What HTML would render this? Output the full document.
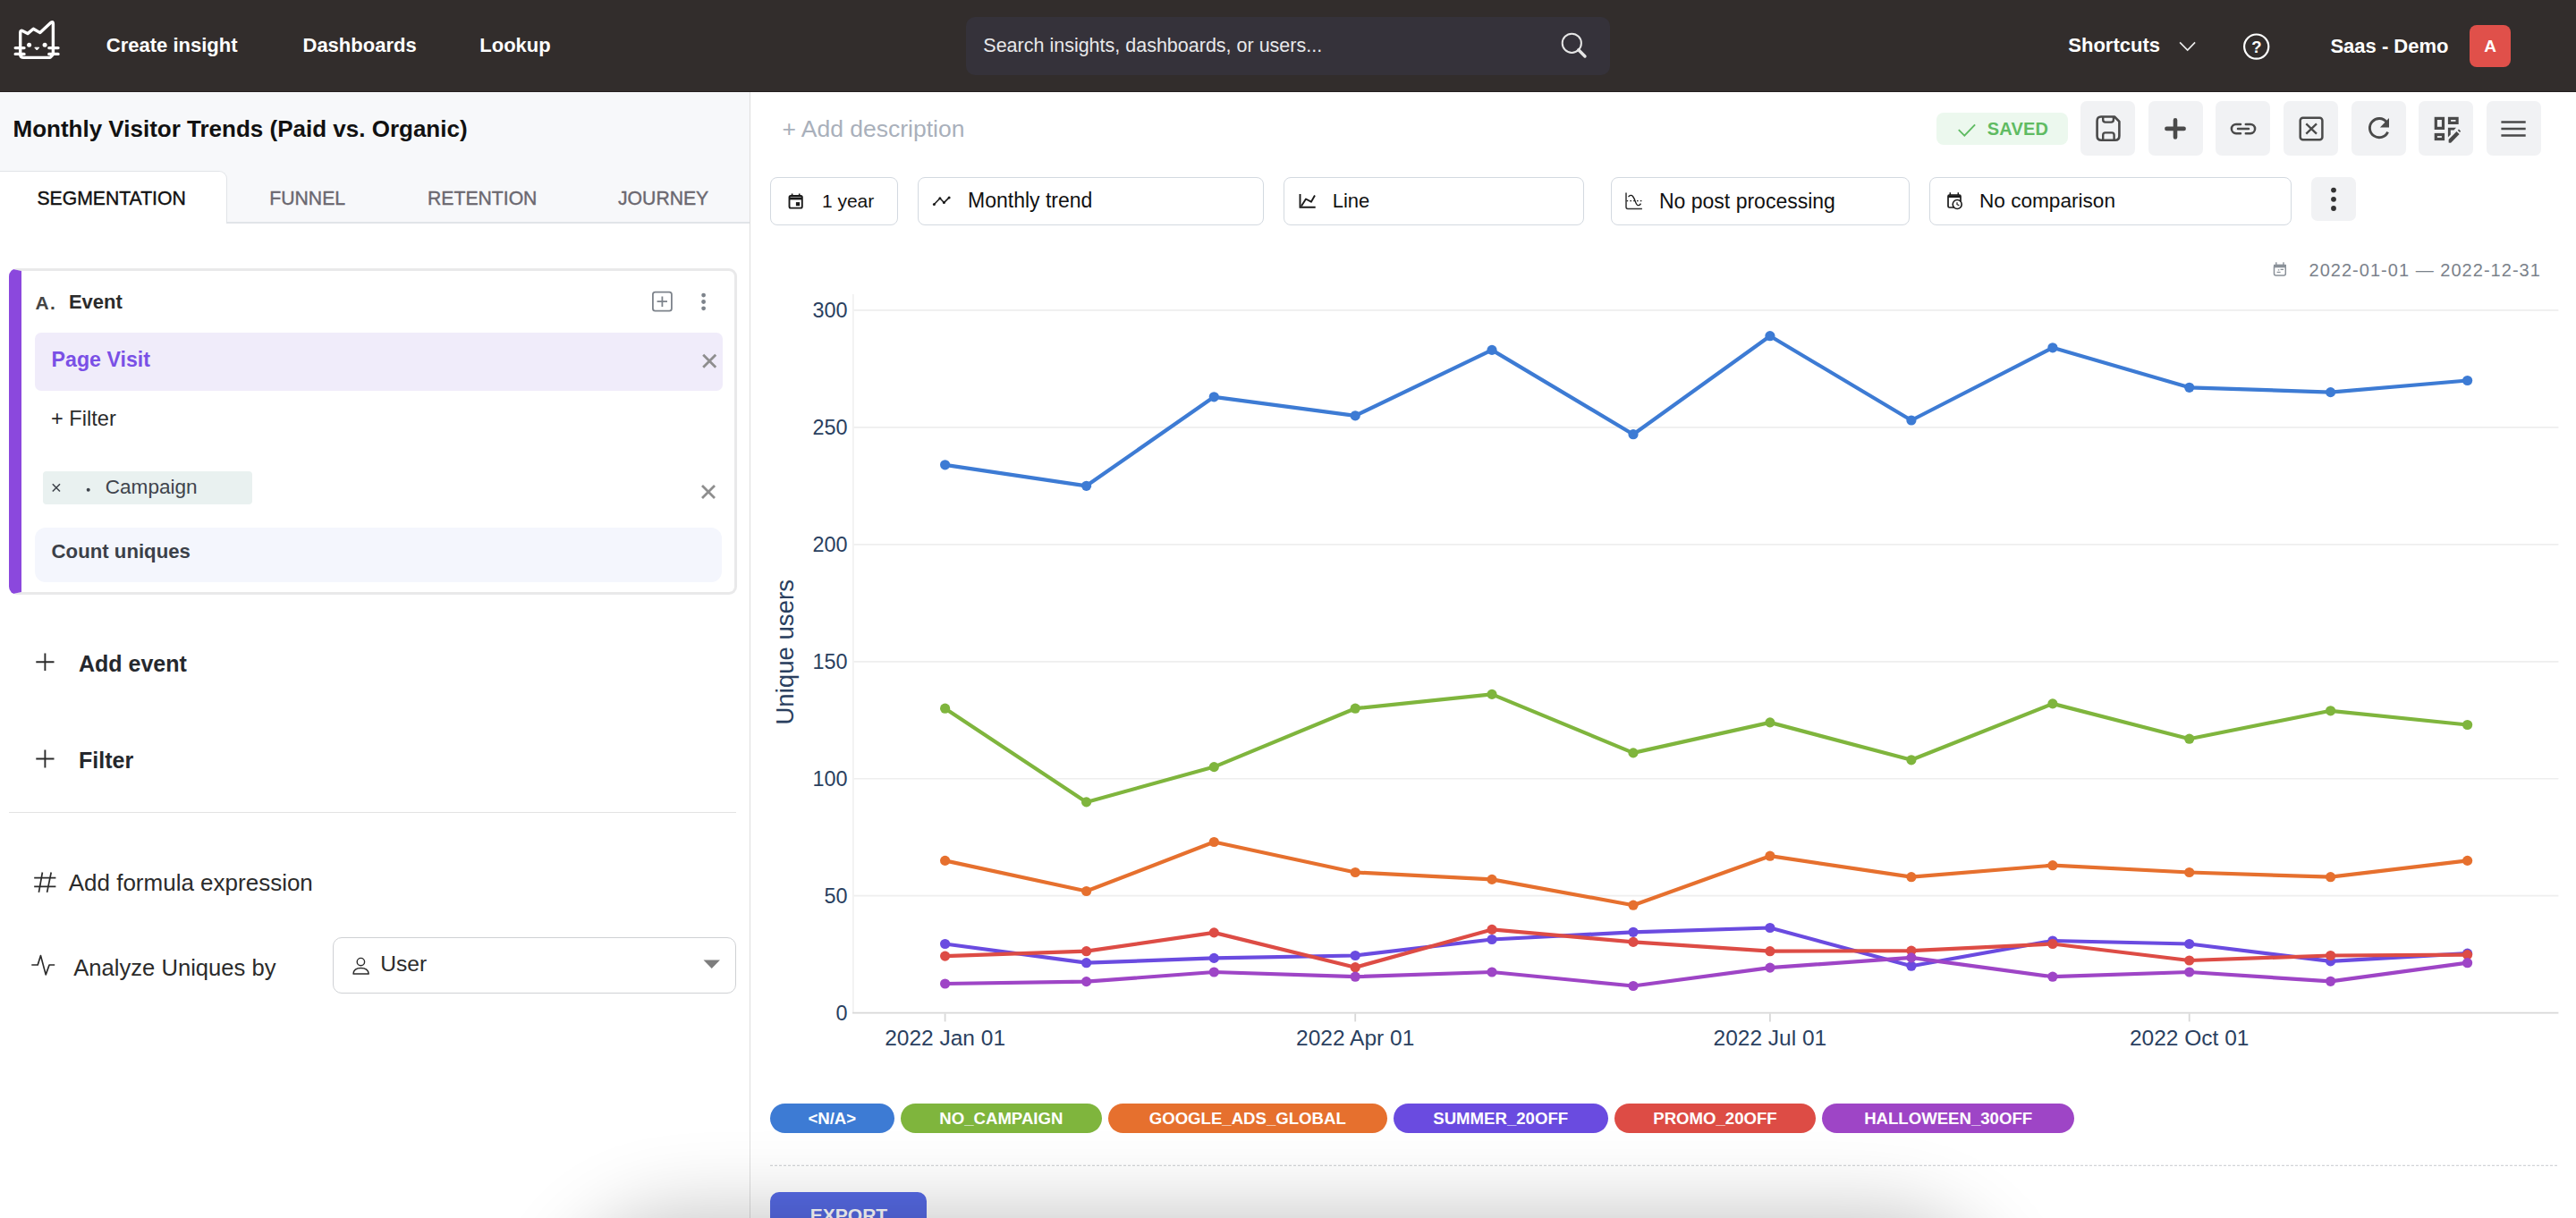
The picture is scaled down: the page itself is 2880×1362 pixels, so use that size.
<!DOCTYPE html>
<html><head><meta charset="utf-8"><style>
html,body{margin:0;padding:0;}
body{width:2880px;height:1362px;overflow:hidden;position:relative;background:#fff;font-family:"Liberation Sans", sans-serif;}
.t{position:absolute;line-height:1;white-space:nowrap;}
.r{position:absolute;}
svg.r{overflow:visible;}
</style></head><body>
<div class="r" style="left:0.0px;top:0.0px;width:2880.0px;height:103.0px;background:#322d2c;"></div>
<div class="r" style="left:0.0px;top:102.0px;width:2880.0px;height:1.0px;background:#241f1f;"></div>
<div class="t" style="left:118.8px;top:40.2px;font-size:22px;font-weight:700;color:#fff;">Create insight</div>
<div class="t" style="left:338.5px;top:40.4px;font-size:22px;font-weight:700;color:#fff;">Dashboards</div>
<div class="t" style="left:536.3px;top:40.4px;font-size:22px;font-weight:700;color:#fff;">Lookup</div>
<div class="r" style="left:1079.8px;top:19.0px;width:719.9px;height:65.0px;background:#35323a;border-radius:10px;"></div>
<div class="t" style="left:1099.3px;top:40.7px;font-size:21.5px;font-weight:400;color:#e8e8ea;">Search insights, dashboards, or users...</div>
<div class="t" style="left:2312.3px;top:40.1px;font-size:22px;font-weight:700;color:#fff;">Shortcuts</div>
<div class="t" style="left:2605.4px;top:40.5px;font-size:22px;font-weight:700;color:#fff;">Saas - Demo</div>
<div class="r" style="left:2761.0px;top:28.0px;width:46.0px;height:47.0px;background:#e0504a;border-radius:8px;"></div>
<div class="t" style="left:2777.3px;top:41.8px;font-size:19px;font-weight:700;color:#fff;">A</div>
<div class="r" style="left:0.0px;top:103.0px;width:838.0px;height:146.0px;background:#f7f8fa;"></div>
<div class="r" style="left:0.0px;top:248.0px;width:838.0px;height:1.5px;background:#e1e4e8;"></div>
<div class="r" style="left:838.0px;top:103.0px;width:1.3px;height:1259.0px;background:#dedede;"></div>
<div class="r" style="left:0.0px;top:191.0px;width:254.3px;height:59.0px;background:#fff;border:1.5px solid #e1e4e8;border-left:none;border-bottom:none;border-top-right-radius:9px;box-sizing:border-box;"></div>
<div class="t" style="left:14.5px;top:131.2px;font-size:26px;font-weight:700;color:#111;">Monthly Visitor Trends (Paid vs. Organic)</div>
<div class="t" style="left:41.4px;top:210.7px;font-size:21.2px;font-weight:400;color:#111;-webkit-text-stroke:0.4px currentColor;">SEGMENTATION</div>
<div class="t" style="left:301.3px;top:210.7px;font-size:21.2px;font-weight:400;color:#6b6870;-webkit-text-stroke:0.4px currentColor;">FUNNEL</div>
<div class="t" style="left:478.0px;top:210.7px;font-size:21.2px;font-weight:400;color:#6b6870;-webkit-text-stroke:0.4px currentColor;">RETENTION</div>
<div class="t" style="left:691.0px;top:210.7px;font-size:21.2px;font-weight:400;color:#6b6870;-webkit-text-stroke:0.4px currentColor;">JOURNEY</div>
<div class="r" style="left:10.2px;top:300.0px;width:814.3px;height:365.0px;background:#fff;border:3px solid #e9e9ea;border-left:14px solid #8b48dd;border-radius:9px;box-sizing:border-box;"></div>
<div class="t" style="left:39.4px;top:327.9px;font-size:21px;font-weight:700;color:#454545;letter-spacing:1.5px;">A.</div>
<div class="t" style="left:76.9px;top:327.1px;font-size:22px;font-weight:700;color:#2b2b2b;">Event</div>
<div class="r" style="left:39.2px;top:372.0px;width:768.6px;height:65.0px;background:#f0ecfa;border-radius:7px;"></div>
<div class="t" style="left:57.6px;top:390.5px;font-size:23.2px;font-weight:700;color:#7a50e6;">Page Visit</div>
<div class="t" style="left:57.0px;top:456.5px;font-size:23.6px;font-weight:400;color:#2b2b2b;">+ Filter</div>
<div class="r" style="left:48.3px;top:527.0px;width:233.4px;height:36.7px;background:#e9f1f0;border-radius:4px;"></div>
<div class="t" style="left:117.7px;top:533.9px;font-size:22.6px;font-weight:400;color:#3f444c;">Campaign</div>
<div class="r" style="left:39.0px;top:590.0px;width:768.0px;height:61.0px;background:#f4f6fd;border-radius:12px;"></div>
<div class="t" style="left:57.6px;top:606.0px;font-size:22.2px;font-weight:700;color:#3b4048;">Count uniques</div>
<div class="t" style="left:88.0px;top:729.8px;font-size:25px;font-weight:700;color:#25282d;">Add event</div>
<div class="t" style="left:88.0px;top:837.8px;font-size:25px;font-weight:700;color:#25282d;">Filter</div>
<div class="r" style="left:10.0px;top:908.0px;width:813.0px;height:1.3px;background:#e3e3e3;"></div>
<div class="t" style="left:76.7px;top:974.4px;font-size:26px;font-weight:400;color:#2b2b2b;">Add formula expression</div>
<div class="t" style="left:82.3px;top:1069.8px;font-size:25.6px;font-weight:400;color:#2b2b2b;">Analyze Uniques by</div>
<div class="r" style="left:372.3px;top:1048.0px;width:450.7px;height:63.0px;background:#fff;border:1.5px solid #cfd1d4;border-radius:10px;box-sizing:border-box;"></div>
<div class="t" style="left:425.3px;top:1065.9px;font-size:24.6px;font-weight:400;color:#2b2b2b;">User</div>
<div class="t" style="left:874.4px;top:131.3px;font-size:26.5px;font-weight:400;color:#a9b0bb;">+ Add description</div>
<div class="r" style="left:2165.0px;top:126.0px;width:147.0px;height:36.0px;background:#ecf8ee;border-radius:8px;"></div>
<div class="t" style="left:2221.8px;top:133.8px;font-size:20px;font-weight:700;color:#5fbb62;letter-spacing:0.2px;">SAVED</div>
<div class="r" style="left:2326.0px;top:113.0px;width:61.0px;height:61.0px;background:#f1f2f4;border-radius:7px;"></div>
<div class="r" style="left:2402.0px;top:113.0px;width:61.0px;height:61.0px;background:#f1f2f4;border-radius:7px;"></div>
<div class="r" style="left:2477.0px;top:113.0px;width:61.0px;height:61.0px;background:#f1f2f4;border-radius:7px;"></div>
<div class="r" style="left:2553.0px;top:113.0px;width:61.0px;height:61.0px;background:#f1f2f4;border-radius:7px;"></div>
<div class="r" style="left:2629.0px;top:113.0px;width:61.0px;height:61.0px;background:#f1f2f4;border-radius:7px;"></div>
<div class="r" style="left:2704.0px;top:113.0px;width:61.0px;height:61.0px;background:#f1f2f4;border-radius:7px;"></div>
<div class="r" style="left:2780.0px;top:113.0px;width:61.0px;height:61.0px;background:#f1f2f4;border-radius:7px;"></div>
<div class="r" style="left:861.4px;top:198.2px;width:142.2px;height:53.8px;background:#fff;border:1.5px solid #d3d9e0;border-radius:8px;box-sizing:border-box;"></div>
<div class="r" style="left:1026.0px;top:198.2px;width:387.0px;height:53.8px;background:#fff;border:1.5px solid #d3d9e0;border-radius:8px;box-sizing:border-box;"></div>
<div class="r" style="left:1434.6px;top:198.2px;width:336.0px;height:53.8px;background:#fff;border:1.5px solid #d3d9e0;border-radius:8px;box-sizing:border-box;"></div>
<div class="r" style="left:1800.5px;top:198.2px;width:334.9px;height:53.8px;background:#fff;border:1.5px solid #d3d9e0;border-radius:8px;box-sizing:border-box;"></div>
<div class="r" style="left:2156.7px;top:198.2px;width:404.9px;height:53.8px;background:#fff;border:1.5px solid #d3d9e0;border-radius:8px;box-sizing:border-box;"></div>
<div class="t" style="left:918.9px;top:214.2px;font-size:21px;font-weight:400;color:#111;">1 year</div>
<div class="t" style="left:1082.0px;top:213.2px;font-size:23px;font-weight:400;color:#111;">Monthly trend</div>
<div class="t" style="left:1489.7px;top:214.4px;font-size:22px;font-weight:400;color:#111;">Line</div>
<div class="t" style="left:1855.0px;top:213.5px;font-size:23px;font-weight:400;color:#111;">No post processing</div>
<div class="t" style="left:2213.0px;top:213.9px;font-size:22.6px;font-weight:400;color:#111;">No comparison</div>
<div class="r" style="left:2584.3px;top:198.4px;width:49.4px;height:48.9px;background:#f1f2f4;border-radius:7px;"></div>
<div class="t" style="left:2581.5px;top:291.9px;font-size:20px;font-weight:400;color:#7b828b;letter-spacing:1.03px;">2022-01-01 — 2022-12-31</div>
<svg class="r" style="left:0;top:0" width="2880" height="1362"><line x1="954.5" y1="1001.70" x2="2860.4" y2="1001.70" stroke="#eeeeee" stroke-width="1.7"/><line x1="954.5" y1="870.74" x2="2860.4" y2="870.74" stroke="#eeeeee" stroke-width="1.7"/><line x1="954.5" y1="739.78" x2="2860.4" y2="739.78" stroke="#eeeeee" stroke-width="1.7"/><line x1="954.5" y1="608.82" x2="2860.4" y2="608.82" stroke="#eeeeee" stroke-width="1.7"/><line x1="954.5" y1="477.86" x2="2860.4" y2="477.86" stroke="#eeeeee" stroke-width="1.7"/><line x1="954.5" y1="346.90" x2="2860.4" y2="346.90" stroke="#eeeeee" stroke-width="1.7"/><line x1="953.8" y1="329" x2="953.8" y2="1132" stroke="#f0f0f0" stroke-width="1.7"/><line x1="953" y1="1132.66" x2="2860.4" y2="1132.66" stroke="#d8d8d8" stroke-width="1.8"/><line x1="1056.6" y1="1133.5" x2="1056.6" y2="1142.4" stroke="#d8d8d8" stroke-width="1.8"/><line x1="1515.2" y1="1133.5" x2="1515.2" y2="1142.4" stroke="#d8d8d8" stroke-width="1.8"/><line x1="1978.9" y1="1133.5" x2="1978.9" y2="1142.4" stroke="#d8d8d8" stroke-width="1.8"/><line x1="2447.7" y1="1133.5" x2="2447.7" y2="1142.4" stroke="#d8d8d8" stroke-width="1.8"/><text x="947.5" y="1141.0" text-anchor="end" font-family="Liberation Sans" font-size="23.4" fill="#2a3f5f">0</text><text x="947.5" y="1010.0" text-anchor="end" font-family="Liberation Sans" font-size="23.4" fill="#2a3f5f">50</text><text x="947.5" y="879.0" text-anchor="end" font-family="Liberation Sans" font-size="23.4" fill="#2a3f5f">100</text><text x="947.5" y="748.1" text-anchor="end" font-family="Liberation Sans" font-size="23.4" fill="#2a3f5f">150</text><text x="947.5" y="617.1" text-anchor="end" font-family="Liberation Sans" font-size="23.4" fill="#2a3f5f">200</text><text x="947.5" y="486.2" text-anchor="end" font-family="Liberation Sans" font-size="23.4" fill="#2a3f5f">250</text><text x="947.5" y="355.2" text-anchor="end" font-family="Liberation Sans" font-size="23.4" fill="#2a3f5f">300</text><text x="1056.6" y="1169" text-anchor="middle" font-family="Liberation Sans" font-size="24.5" fill="#2a3f5f">2022 Jan 01</text><text x="1515.2" y="1169" text-anchor="middle" font-family="Liberation Sans" font-size="24.5" fill="#2a3f5f">2022 Apr 01</text><text x="1978.9" y="1169" text-anchor="middle" font-family="Liberation Sans" font-size="24.5" fill="#2a3f5f">2022 Jul 01</text><text x="2447.7" y="1169" text-anchor="middle" font-family="Liberation Sans" font-size="24.5" fill="#2a3f5f">2022 Oct 01</text><text x="0" y="0" transform="translate(887.3,729.3) rotate(-90)" text-anchor="middle" font-family="Liberation Sans" font-size="27.6" fill="#2a3f5f">Unique users</text><polyline points="1056.6,519.8 1214.6,543.3 1357.3,443.8 1515.2,464.8 1668.0,391.4 1826.0,485.7 1978.9,375.7 2136.9,470.0 2294.9,388.8 2447.7,433.3 2605.6,438.6 2758.6,425.5" fill="none" stroke="#3d7bd4" stroke-width="4.2" stroke-linejoin="round"/><circle cx="1056.6" cy="519.8" r="5.6" fill="#3d7bd4"/><circle cx="1214.6" cy="543.3" r="5.6" fill="#3d7bd4"/><circle cx="1357.3" cy="443.8" r="5.6" fill="#3d7bd4"/><circle cx="1515.2" cy="464.8" r="5.6" fill="#3d7bd4"/><circle cx="1668.0" cy="391.4" r="5.6" fill="#3d7bd4"/><circle cx="1826.0" cy="485.7" r="5.6" fill="#3d7bd4"/><circle cx="1978.9" cy="375.7" r="5.6" fill="#3d7bd4"/><circle cx="2136.9" cy="470.0" r="5.6" fill="#3d7bd4"/><circle cx="2294.9" cy="388.8" r="5.6" fill="#3d7bd4"/><circle cx="2447.7" cy="433.3" r="5.6" fill="#3d7bd4"/><circle cx="2605.6" cy="438.6" r="5.6" fill="#3d7bd4"/><circle cx="2758.6" cy="425.5" r="5.6" fill="#3d7bd4"/><polyline points="1056.6,792.2 1214.6,896.9 1357.3,857.6 1515.2,792.2 1668.0,776.4 1826.0,841.9 1978.9,807.9 2136.9,849.8 2294.9,786.9 2447.7,826.2 2605.6,794.8 2758.6,810.5" fill="none" stroke="#7fb53d" stroke-width="4.2" stroke-linejoin="round"/><circle cx="1056.6" cy="792.2" r="5.6" fill="#7fb53d"/><circle cx="1214.6" cy="896.9" r="5.6" fill="#7fb53d"/><circle cx="1357.3" cy="857.6" r="5.6" fill="#7fb53d"/><circle cx="1515.2" cy="792.2" r="5.6" fill="#7fb53d"/><circle cx="1668.0" cy="776.4" r="5.6" fill="#7fb53d"/><circle cx="1826.0" cy="841.9" r="5.6" fill="#7fb53d"/><circle cx="1978.9" cy="807.9" r="5.6" fill="#7fb53d"/><circle cx="2136.9" cy="849.8" r="5.6" fill="#7fb53d"/><circle cx="2294.9" cy="786.9" r="5.6" fill="#7fb53d"/><circle cx="2447.7" cy="826.2" r="5.6" fill="#7fb53d"/><circle cx="2605.6" cy="794.8" r="5.6" fill="#7fb53d"/><circle cx="2758.6" cy="810.5" r="5.6" fill="#7fb53d"/><polyline points="1056.6,962.4 1214.6,996.5 1357.3,941.5 1515.2,975.5 1668.0,983.4 1826.0,1012.2 1978.9,957.2 2136.9,980.7 2294.9,967.7 2447.7,975.5 2605.6,980.7 2758.6,962.4" fill="none" stroke="#e6702e" stroke-width="4.2" stroke-linejoin="round"/><circle cx="1056.6" cy="962.4" r="5.6" fill="#e6702e"/><circle cx="1214.6" cy="996.5" r="5.6" fill="#e6702e"/><circle cx="1357.3" cy="941.5" r="5.6" fill="#e6702e"/><circle cx="1515.2" cy="975.5" r="5.6" fill="#e6702e"/><circle cx="1668.0" cy="983.4" r="5.6" fill="#e6702e"/><circle cx="1826.0" cy="1012.2" r="5.6" fill="#e6702e"/><circle cx="1978.9" cy="957.2" r="5.6" fill="#e6702e"/><circle cx="2136.9" cy="980.7" r="5.6" fill="#e6702e"/><circle cx="2294.9" cy="967.7" r="5.6" fill="#e6702e"/><circle cx="2447.7" cy="975.5" r="5.6" fill="#e6702e"/><circle cx="2605.6" cy="980.7" r="5.6" fill="#e6702e"/><circle cx="2758.6" cy="962.4" r="5.6" fill="#e6702e"/><polyline points="1056.6,1055.5 1214.6,1076.7 1357.3,1071.4 1515.2,1068.5 1668.0,1050.5 1826.0,1042.3 1978.9,1037.5 2136.9,1080.2 2294.9,1052.0 2447.7,1055.5 2605.6,1074.9 2758.6,1066.2" fill="none" stroke="#6a4be0" stroke-width="4.2" stroke-linejoin="round"/><circle cx="1056.6" cy="1055.5" r="5.6" fill="#6a4be0"/><circle cx="1214.6" cy="1076.7" r="5.6" fill="#6a4be0"/><circle cx="1357.3" cy="1071.4" r="5.6" fill="#6a4be0"/><circle cx="1515.2" cy="1068.5" r="5.6" fill="#6a4be0"/><circle cx="1668.0" cy="1050.5" r="5.6" fill="#6a4be0"/><circle cx="1826.0" cy="1042.3" r="5.6" fill="#6a4be0"/><circle cx="1978.9" cy="1037.5" r="5.6" fill="#6a4be0"/><circle cx="2136.9" cy="1080.2" r="5.6" fill="#6a4be0"/><circle cx="2294.9" cy="1052.0" r="5.6" fill="#6a4be0"/><circle cx="2447.7" cy="1055.5" r="5.6" fill="#6a4be0"/><circle cx="2605.6" cy="1074.9" r="5.6" fill="#6a4be0"/><circle cx="2758.6" cy="1066.2" r="5.6" fill="#6a4be0"/><polyline points="1056.6,1069.1 1214.6,1063.7 1357.3,1042.9 1515.2,1081.7 1668.0,1039.4 1826.0,1053.4 1978.9,1063.7 2136.9,1063.1 2294.9,1055.5 2447.7,1074.0 2605.6,1068.5 2758.6,1067.6" fill="none" stroke="#dd4c45" stroke-width="4.2" stroke-linejoin="round"/><circle cx="1056.6" cy="1069.1" r="5.6" fill="#dd4c45"/><circle cx="1214.6" cy="1063.7" r="5.6" fill="#dd4c45"/><circle cx="1357.3" cy="1042.9" r="5.6" fill="#dd4c45"/><circle cx="1515.2" cy="1081.7" r="5.6" fill="#dd4c45"/><circle cx="1668.0" cy="1039.4" r="5.6" fill="#dd4c45"/><circle cx="1826.0" cy="1053.4" r="5.6" fill="#dd4c45"/><circle cx="1978.9" cy="1063.7" r="5.6" fill="#dd4c45"/><circle cx="2136.9" cy="1063.1" r="5.6" fill="#dd4c45"/><circle cx="2294.9" cy="1055.5" r="5.6" fill="#dd4c45"/><circle cx="2447.7" cy="1074.0" r="5.6" fill="#dd4c45"/><circle cx="2605.6" cy="1068.5" r="5.6" fill="#dd4c45"/><circle cx="2758.6" cy="1067.6" r="5.6" fill="#dd4c45"/><polyline points="1056.6,1100.0 1214.6,1097.6 1357.3,1087.0 1515.2,1092.2 1668.0,1087.0 1826.0,1102.5 1978.9,1082.1 2136.9,1070.9 2294.9,1092.2 2447.7,1087.0 2605.6,1097.3 2758.6,1076.7" fill="none" stroke="#9e45c6" stroke-width="4.2" stroke-linejoin="round"/><circle cx="1056.6" cy="1100.0" r="5.6" fill="#9e45c6"/><circle cx="1214.6" cy="1097.6" r="5.6" fill="#9e45c6"/><circle cx="1357.3" cy="1087.0" r="5.6" fill="#9e45c6"/><circle cx="1515.2" cy="1092.2" r="5.6" fill="#9e45c6"/><circle cx="1668.0" cy="1087.0" r="5.6" fill="#9e45c6"/><circle cx="1826.0" cy="1102.5" r="5.6" fill="#9e45c6"/><circle cx="1978.9" cy="1082.1" r="5.6" fill="#9e45c6"/><circle cx="2136.9" cy="1070.9" r="5.6" fill="#9e45c6"/><circle cx="2294.9" cy="1092.2" r="5.6" fill="#9e45c6"/><circle cx="2447.7" cy="1087.0" r="5.6" fill="#9e45c6"/><circle cx="2605.6" cy="1097.3" r="5.6" fill="#9e45c6"/><circle cx="2758.6" cy="1076.7" r="5.6" fill="#9e45c6"/></svg>
<div class="r" style="left:861px;top:1234.2px;width:138.6px;height:32.4px;border-radius:17px;background:#3d7bd4;color:#fff;font-weight:700;font-size:18.6px;line-height:33px;text-align:center;">&lt;N/A&gt;</div>
<div class="r" style="left:1007px;top:1234.2px;width:224.7px;height:32.4px;border-radius:17px;background:#7fb53d;color:#fff;font-weight:700;font-size:18.6px;line-height:33px;text-align:center;">NO_CAMPAIGN</div>
<div class="r" style="left:1239px;top:1234.2px;width:311.5px;height:32.4px;border-radius:17px;background:#e6702e;color:#fff;font-weight:700;font-size:18.6px;line-height:33px;text-align:center;">GOOGLE_ADS_GLOBAL</div>
<div class="r" style="left:1557.8px;top:1234.2px;width:239.8px;height:32.4px;border-radius:17px;background:#6a4be0;color:#fff;font-weight:700;font-size:18.6px;line-height:33px;text-align:center;">SUMMER_20OFF</div>
<div class="r" style="left:1805.3px;top:1234.2px;width:224.4px;height:32.4px;border-radius:17px;background:#dd4c45;color:#fff;font-weight:700;font-size:18.6px;line-height:33px;text-align:center;">PROMO_20OFF</div>
<div class="r" style="left:2036.8px;top:1234.2px;width:282.7px;height:32.4px;border-radius:17px;background:#9e45c6;color:#fff;font-weight:700;font-size:18.6px;line-height:33px;text-align:center;">HALLOWEEN_30OFF</div>
<svg class="r" style="left:861px;top:1300px" width="2000" height="6"><line x1="0" y1="3.3" x2="2000" y2="3.3" stroke="#d2d4d8" stroke-width="1.3" stroke-dasharray="3 2"/></svg>
<div class="r" style="left:860.9px;top:1332.8px;width:175.1px;height:87.2px;background:#5569e3;border-radius:10px;"></div>
<div class="t" style="left:905.8px;top:1348.2px;font-size:21px;font-weight:700;color:#fff;">EXPORT</div>
<svg class="r" style="left:0;top:0;z-index:10" width="2880" height="1362"><g fill="none" stroke="#fff" stroke-width="3.4" stroke-linejoin="round" stroke-linecap="round">
<path d="M22.7 61 V36.5 Q22.7 33.3 25.6 34.8 L30.9 37.6 L37.3 32.2 L44.8 36.6 L56.6 25.6 Q59.4 23.2 59.4 26.6 V59.5 Q59.4 61 58 62.4 L56 64.4 H26.5 Q22.7 64.4 22.7 61 Z"/>
<path d="M17.2 53.6 H27 M17.2 60.4 H27 M54.8 53.6 H65 M54.8 60.4 H65"/></g>
<circle cx="32.6" cy="50.2" r="2.5" fill="#fff"/><circle cx="50.1" cy="50.2" r="2.5" fill="#fff"/>
<path d="M38.8 53.2 H43.8 L41.3 56 Z" fill="#fff" stroke="#fff" stroke-width="1" stroke-linejoin="round"/><circle cx="1757.3" cy="48.3" r="10.6" fill="none" stroke="#e6e6e6" stroke-width="2.0"/><path d="M1764.8 55.8 L1772 63" stroke="#e6e6e6" stroke-width="3.4" stroke-linecap="round"/><path d="M2437.1 47.4 L2445.7 56.1 L2454.1 47.4" fill="none" stroke="#eee" stroke-width="1.6"/><circle cx="2522.7" cy="52.1" r="13.6" fill="none" stroke="#fff" stroke-width="2.2"/><text x="2522.9" y="59" text-anchor="middle" font-family="Liberation Sans" font-weight="700" font-size="18.5" fill="#fff">?</text><rect x="729.9" y="326.7" width="21" height="21" rx="2.6" fill="none" stroke="#7d838b" stroke-width="1.8"/><path d="M740.4 331.4 V343 M734.6 337.2 H746" stroke="#7d838b" stroke-width="1.8"/><circle cx="786.6" cy="330.1" r="2.4" fill="#7d838b"/><circle cx="786.6" cy="337.5" r="2.4" fill="#7d838b"/><circle cx="786.6" cy="344.8" r="2.4" fill="#7d838b"/><path d="M786.2 396.8 L800.2 410.8 M800.2 396.8 L786.2 410.8" stroke="#8e8e8e" stroke-width="2.8"/><path d="M58.8 541.3 L67 549.5 M67 541.3 L58.8 549.5" stroke="#3f444c" stroke-width="1.6"/><circle cx="98.7" cy="547.7" r="2" fill="#3f444c"/><path d="M785 543 L799 557 M799 543 L785 557" stroke="#8e8e8e" stroke-width="2.8"/><path d="M50.4 730.4 V750 M40.3 740.2 H60.5" stroke="#2b2b2b" stroke-width="1.9"/><path d="M50.4 838.5 V858.5 M40.3 848.5 H60.5" stroke="#2b2b2b" stroke-width="1.9"/><path d="M47.4 975.5 L43.4 997.9 M57.2 975.5 L52.6 997.9 M38.2 981.6 H62.4 M38.2 991.3 H62.4" stroke="#2b2b2b" stroke-width="1.7"/><path d="M35.3 1079 H42.2 L45.5 1068.6 L51.2 1089.9 L55.1 1079 H61.2" fill="none" stroke="#2b2b2b" stroke-width="1.7" stroke-linejoin="round"/><circle cx="403.4" cy="1075.6" r="4.2" fill="none" stroke="#2b2b2b" stroke-width="1.4"/><path d="M395 1089 Q395.5 1082.5 403.5 1082.5 Q411.5 1082.5 412.2 1089 Z" fill="none" stroke="#2b2b2b" stroke-width="1.4" stroke-linejoin="round"/><path d="M786.5 1073.6 H805 L795.7 1083 Z" fill="#7d7d7d"/><path d="M2189.8 145.2 L2196.3 151.7 L2208.1 139.3" fill="none" stroke="#5fbb62" stroke-width="1.9"/><path d="M2349 130.5 H2364 L2369.4 135.9 V152 Q2369.4 156.7 2364.7 156.7 H2349.3 Q2344.6 156.7 2344.6 152 V135.2 Q2344.6 130.5 2349 130.5 Z" fill="none" stroke="#4a4a4a" stroke-width="2.6" stroke-linejoin="round"/><path d="M2351.2 130.5 V134 Q2351.2 136.6 2353.8 136.6 H2360.3 Q2362.9 136.6 2362.9 134 V130.5" fill="none" stroke="#4a4a4a" stroke-width="2.4"/><path d="M2351.2 156.7 V151 Q2351.2 148.4 2353.8 148.4 H2361 Q2363.6 148.4 2363.6 151 V156.7" fill="none" stroke="#4a4a4a" stroke-width="2.4"/><path d="M2432 134.3 V153.5 M2422.4 143.9 H2441.6" stroke="#4a4a4a" stroke-width="4.6" stroke-linecap="round"/><path d="M2505 139 H2500 A5.1 5.1 0 0 0 2500 149.2 H2505 M2510.8 139 H2516 A5.1 5.1 0 0 1 2516 149.2 H2510.8 M2502 144.1 H2514" fill="none" stroke="#4a4a4a" stroke-width="2.5" stroke-linecap="round"/><rect x="2571.7" y="131.7" width="24.7" height="24.5" rx="3" fill="none" stroke="#4a4a4a" stroke-width="2.5"/><path d="M2578.3 138.3 L2590 149.6 M2590 138.3 L2578.3 149.6" stroke="#4a4a4a" stroke-width="2.3"/><path d="M2668.3 136.5 A10.6 10.6 0 1 0 2669.6 147.6" fill="none" stroke="#4a4a4a" stroke-width="2.9"/><path d="M2660.9 142.5 L2671 132 L2671 142.5 Z" fill="#4a4a4a"/><rect x="2723.3" y="132.4" width="8.2" height="11" fill="none" stroke="#4a4a4a" stroke-width="3.2"/><rect x="2738.5" y="132.4" width="8.6" height="5" fill="none" stroke="#4a4a4a" stroke-width="3.2"/><rect x="2723.3" y="150.5" width="8.2" height="5" fill="none" stroke="#4a4a4a" stroke-width="3.2"/><path d="M2736.9 153.5 V142.8 H2746 L2743.5 145.6 H2739.8 V150.6 Z" fill="#4a4a4a"/><path d="M2737.6 159.5 V156 L2746.5 147 L2749.6 150.1 L2740.6 159.2 Q2740 159.8 2739 159.8 Z" fill="#4a4a4a"/><path d="M2747.8 145.7 L2749 144.5 L2751.2 146.7 L2750 148 Z" fill="#4a4a4a"/><path d="M2796.4 136.4 H2823.7 M2796.4 144.1 H2823.7 M2796.4 151.6 H2823.7" stroke="#4a4a4a" stroke-width="2.5"/><rect x="882.5" y="219" width="14.3" height="13.6" rx="1.6" fill="none" stroke="#1a1a1a" stroke-width="1.9"/><path d="M882.5 220.5 H896.8 V223.4 H882.5 Z" fill="#1a1a1a"/><path d="M885.6 216.5 V219.5 M893.7 216.5 V219.5" stroke="#1a1a1a" stroke-width="1.6"/><rect x="889.9" y="226.1" width="4.2" height="4.1" fill="#1a1a1a"/><path d="M1044.4 228.6 L1050.9 221.7 L1055.4 226.6 L1061.1 220.9" fill="none" stroke="#1a1a1a" stroke-width="1.5" stroke-linejoin="round"/><circle cx="1044.4" cy="228.6" r="1.5" fill="#1a1a1a"/><circle cx="1050.9" cy="221.7" r="1.5" fill="#1a1a1a"/><circle cx="1055.4" cy="226.6" r="1.5" fill="#1a1a1a"/><circle cx="1061.1" cy="220.9" r="1.5" fill="#1a1a1a"/><path d="M1453.5 217.1 V231.8 H1470.7" fill="none" stroke="#1a1a1a" stroke-width="1.9"/><path d="M1454.9 230.6 L1460 222.5 L1465.9 225.7 L1470 218.5" fill="none" stroke="#1a1a1a" stroke-width="1.9" stroke-linejoin="round"/><path d="M1818 215.5 V231.6 Q1818 233.4 1819.8 233.4 H1835.9" fill="none" stroke="#333" stroke-width="1.5"/><path d="M1820.5 220.1 Q1823.3 217 1825.5 219.5 Q1827 221.5 1828.3 225.3 Q1830 230 1831.7 229.6 Q1833.5 229.5 1834.5 227.6" fill="none" stroke="#1a1a1a" stroke-width="1.3"/><path d="M1818.6 224.6 H1835.9" stroke="#1a1a1a" stroke-width="1.1" stroke-dasharray="1.6 2.2"/><rect x="2178" y="218" width="14" height="14" rx="1.5" fill="none" stroke="#1a1a1a" stroke-width="1.7"/><path d="M2178 218.3 H2192 V221 H2178 Z" fill="#1a1a1a"/><path d="M2180.3 215.2 V218 M2189.3 215.2 V218" stroke="#1a1a1a" stroke-width="1.5"/><circle cx="2188.2" cy="228.5" r="5" fill="#fff" stroke="#1a1a1a" stroke-width="1.6"/><path d="M2188 226.2 V228.7 L2190.4 229.6" fill="none" stroke="#1a1a1a" stroke-width="1.2"/><circle cx="2609" cy="212.6" r="2.9" fill="#333"/><circle cx="2609" cy="222.8" r="2.9" fill="#333"/><circle cx="2609" cy="233" r="2.9" fill="#333"/><rect x="2542.5" y="296.5" width="12.8" height="11.6" rx="2" fill="none" stroke="#8a9199" stroke-width="1.5"/><path d="M2542 295.8 H2556 V299.3 H2542 Z" fill="#8a9199"/><path d="M2544.8 293.2 V296.4 M2553 293.2 V296.4" stroke="#8a9199" stroke-width="1.4"/><path d="M2546.8 301.8 H2548.3 M2549.6 301.4 H2553 M2545.6 304.4 H2549.6" stroke="#8a9199" stroke-width="1.2"/></svg>
<div class="r" style="left:665px;top:1392px;width:1536px;height:200px;border-radius:100px;box-shadow:0 0 90px 36px rgba(0,0,0,0.23);z-index:50;"></div>
</body></html>
